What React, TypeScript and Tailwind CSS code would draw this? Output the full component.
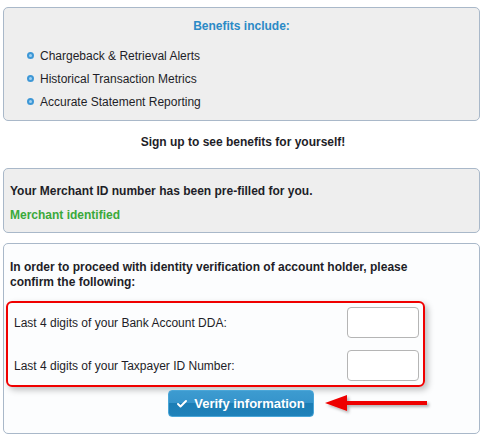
import { Check } from 'lucide-react';

const benefits = [
  'Chargeback & Retrieval Alerts',
  'Historical Transaction Metrics',
  'Accurate Statement Reporting',
];

const Bullet = () => (
  <span className="inline-block w-[7px] h-[7px] rounded-full bg-[#9fd0f0] border-[2px] border-[#3d97d6] shrink-0" />
);

const App = () => {
  return (
    <div className="w-[486px] h-[438px] bg-white px-[3px] pt-[7px] text-[#1e1e28] text-[12px] font-['Liberation_Sans',Arial,sans-serif]">
      {/* Benefits */}
      <div className="w-[477px] h-[114px] rounded-[5px] border border-[#a9b8c9] bg-[#eeeeee] pt-[11px]">
        <h3 className="text-center font-bold text-[#2b8ac6] leading-[15px]">Benefits include:</h3>
        <ul className="mt-[10px] pl-[23px]">
          {benefits.map((b) => (
            <li key={b} className="flex items-center gap-[6px] h-[23px]">
              <Bullet />
              {b}
            </li>
          ))}
        </ul>
      </div>

      <p className="text-center font-bold leading-[15px] mt-[14px]">Sign up to see benefits for yourself!</p>

      {/* Merchant */}
      <div className="mt-[18px] w-[477px] h-[65px] rounded-[5px] border border-[#a9b8c9] bg-[#eeeeee] pl-[6px] pt-[15px] font-bold">
        <p className="leading-[15px]">Your Merchant ID number has been pre-filled for you.</p>
        <p className="leading-[15px] mt-[9px] text-[#3aa93a]">Merchant identified</p>
      </div>

      {/* Verification */}
      <div className="relative mt-[10px] w-[477px] h-[191px] rounded-[5px] border border-[#a9b8c9] bg-[#fcfdfe] pt-[16px]">
        <p className="font-bold leading-[15px] pl-[6px] pr-[40px]">
          In order to proceed with identity verification of account holder, please confirm the following:
        </p>
        <div className="mt-[11px] ml-[2px] w-[419px] rounded-[6px] border-2 border-[#f00000] shadow-[3px_3px_6px_rgba(0,0,0,0.25)] pl-[6px] pr-[4px] py-[4px] flex flex-col gap-[12px]">
          <div className="flex items-center justify-between">
            <span>Last 4 digits of your Bank Account DDA:</span>
            <input className="w-[72px] h-[31px] rounded-[4px] border border-[#b5b5b5] bg-white" />
          </div>
          <div className="flex items-center justify-between">
            <span>Last 4 digits of your Taxpayer ID Number:</span>
            <input className="w-[72px] h-[31px] rounded-[4px] border border-[#b5b5b5] bg-white" />
          </div>
        </div>
        <div className="flex justify-center mt-[3px] pr-[2px]">
          <button className="w-[146px] h-[27px] rounded-[4px] border border-[#4aa6d8] bg-[linear-gradient(#3d9bd0_0%,#3594cb_50%,#1b7db5_50%,#1f82ba_100%)] text-white font-bold text-[13px] whitespace-nowrap flex items-center justify-center gap-[6px]">
            <Check size={12} strokeWidth={4} />
            Verify information
          </button>
        </div>
        {/* Annotation arrow */}
        <svg className="absolute left-[316px] top-[150px]" width="112" height="24" viewBox="0 0 112 24">
          <defs>
            <filter id="sh" x="-10%" y="-30%" width="130%" height="180%">
              <feDropShadow dx="2" dy="2" stdDeviation="1.5" floodOpacity="0.3" />
            </filter>
          </defs>
          <g filter="url(#sh)">
            <polygon points="5,9 27,1 27,17" fill="#ee0000" />
            <rect x="25" y="7" width="82" height="4" fill="#ee0000" />
          </g>
        </svg>
      </div>
    </div>
  );
};

export default App;
